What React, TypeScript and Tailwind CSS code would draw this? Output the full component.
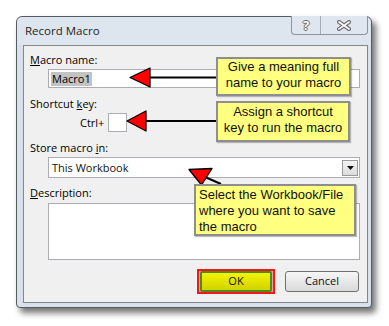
import React from "react";

const ui = { fontFamily: '"Open Sans", "Noto Sans", sans-serif' };
const note = { fontFamily: '"Liberation Sans", Arial, sans-serif' };

function Callout({ className, children }: { className: string; children: React.ReactNode }) {
  return (
    <div
      className={
        "absolute border-2 border-[#8e8e8e] bg-[#ffff80] text-[13px] leading-[16px] text-[#111] shadow-[1px_1px_1px_rgba(0,0,0,0.25)] " +
        className
      }
      style={note}
    >
      {children}
    </div>
  );
}

export default function App() {
  return (
    <div className="relative h-[326px] w-[389px] overflow-hidden bg-white text-[11px] text-black" style={ui}>
      {/* dialog frame */}
      <div className="ml-[16px] mt-[16px] flex h-[292px] w-[356px] flex-col rounded-t-[6px] rounded-b-[4px] border border-[#555b63] bg-[#d7e0eb] shadow-[4px_5px_6px_rgba(0,0,0,0.55)]">
        <div className="flex h-[28px] items-start justify-between rounded-t-[6px] bg-[#dde5ef] pr-[3px]">
          <div className="ml-[8px] mt-[6px] text-[11.5px] leading-[16px] text-[#1e1e1e]">Record Macro</div>
          <div className="flex h-[19px] -mt-px rounded-b-[4px] border border-t-0 border-[#8c949f] bg-[#dfe6ef]">
            <div className="flex w-[29px] items-center justify-center border-r border-[#a5adb8] text-[13px] font-bold leading-none text-white [text-shadow:1px_0_0_#6a6a6a,-1px_0_0_#6a6a6a,0_1px_0_#6a6a6a,0_-1px_0_#6a6a6a]">
              ?
            </div>
            <div className="flex w-[46px] items-center justify-center">
              <svg width="14" height="11" viewBox="0 0 14 11">
                <path d="M2 2 L12 9 M12 2 L2 9" stroke="#6f6f6f" strokeWidth="4" strokeLinecap="square" />
                <path d="M2 2 L12 9 M12 2 L2 9" stroke="#ffffff" strokeWidth="1.6" strokeLinecap="square" />
              </svg>
            </div>
          </div>
        </div>

        {/* content panel */}
        <div className="mb-[4px] ml-[6px] mr-[3px] flex flex-1 flex-col border border-[#83878c] bg-[#f0f0f0]">
          <div className="ml-[6px] mt-[7px] leading-[14px]">
            <span className="underline">M</span>acro name:
          </div>
          <div className="ml-[24px] mt-[2px] flex h-[19px] w-[312px] items-center border border-[#abadb3] bg-white pl-[2px]">
            <span className="bg-[#c3c3c3] px-px leading-[14px]">Macro1</span>
          </div>

          <div className="ml-[6px] mt-[9px] leading-[14px]">
            Shortcut <span className="underline">k</span>ey:
          </div>
          <div className="ml-[56px] mt-[2px] flex items-center gap-[4px]">
            <span className="leading-[14px]">Ctrl+</span>
            <div className="h-[19px] w-[19px] border border-[#abadb3] bg-white" />
          </div>

          <div className="ml-[6px] mt-[9px] leading-[14px]">
            Store macro <span className="underline">i</span>n:
          </div>
          <div className="ml-[24px] mt-[2px] flex h-[21px] w-[312px] items-center justify-between border border-[#abadb3] bg-white pl-[3px] pr-[1px]">
            <span className="leading-[14px] text-[#111]">This Workbook</span>
            <div className="flex h-[16px] w-[16px] items-center justify-center border border-[#9a9a9a] bg-gradient-to-b from-[#f4f4f4] to-[#dcdcdc]">
              <svg width="7" height="4" viewBox="0 0 7 4">
                <path d="M0 0 H7 L3.5 4 Z" fill="#111" />
              </svg>
            </div>
          </div>

          <div className="ml-[6px] mt-[8px] leading-[14px]">
            <span className="underline">D</span>escription:
          </div>
          <div className="ml-[24px] mt-[3px] h-[57px] w-[312px] border border-[#abadb3] bg-white" />

          <div className="mr-[8px] mt-[9px] flex items-center justify-end gap-[10px]">
            <div className="flex h-[25px] w-[78px] items-stretch border-2 border-[#f01818] bg-[#f6a0a0] px-[1px]">
              <div className="flex flex-1 items-center justify-center rounded-[2px] border-2 border-[#4b8c22] bg-gradient-to-b from-[#f4f400] to-[#d2d200] text-[11px] text-[#111]">
                OK
              </div>
            </div>
            <div className="flex h-[21px] w-[74px] items-center justify-center rounded-[3px] border border-[#707070] bg-gradient-to-b from-[#f6f6f6] to-[#dadada] text-[11px] text-[#111]">
              Cancel
            </div>
          </div>
        </div>
      </div>

      {/* arrows */}
      <svg className="pointer-events-none absolute left-0 top-0" width="389" height="326" viewBox="0 0 389 326">
        <line x1="148" y1="77.5" x2="217" y2="77.5" stroke="#000" strokeWidth="2" />
        <polygon points="130,77.5 150,68 150,87" fill="#ff0000" stroke="#000" strokeWidth="1.3" strokeLinejoin="round" />
        <line x1="144" y1="121" x2="217" y2="121" stroke="#000" strokeWidth="2" />
        <polygon points="127,121 146,111 146,131" fill="#ff0000" stroke="#000" strokeWidth="1.3" strokeLinejoin="round" />
        <line x1="205" y1="177" x2="221" y2="184" stroke="#000" strokeWidth="2" />
        <polygon points="189,169.5 212,168.5 201.5,185" fill="#ff0000" stroke="#000" strokeWidth="1.3" strokeLinejoin="round" />
      </svg>

      <Callout className="left-[216px] top-[57px] h-[39px] w-[135px] text-center">
        Give a meaning full
        <br />
        name to your macro
      </Callout>
      <Callout className="left-[216px] top-[101px] h-[41px] w-[134px] pt-px text-center leading-[15px]">
        Assign a shortcut
        <br />
        key to run the macro
      </Callout>
      <Callout className="left-[194px] top-[184px] h-[52px] w-[162px] pl-[3px] pt-px">
        Select the Workbook/File
        <br />
        where you want to save
        <br />
        the macro
      </Callout>
    </div>
  );
}
